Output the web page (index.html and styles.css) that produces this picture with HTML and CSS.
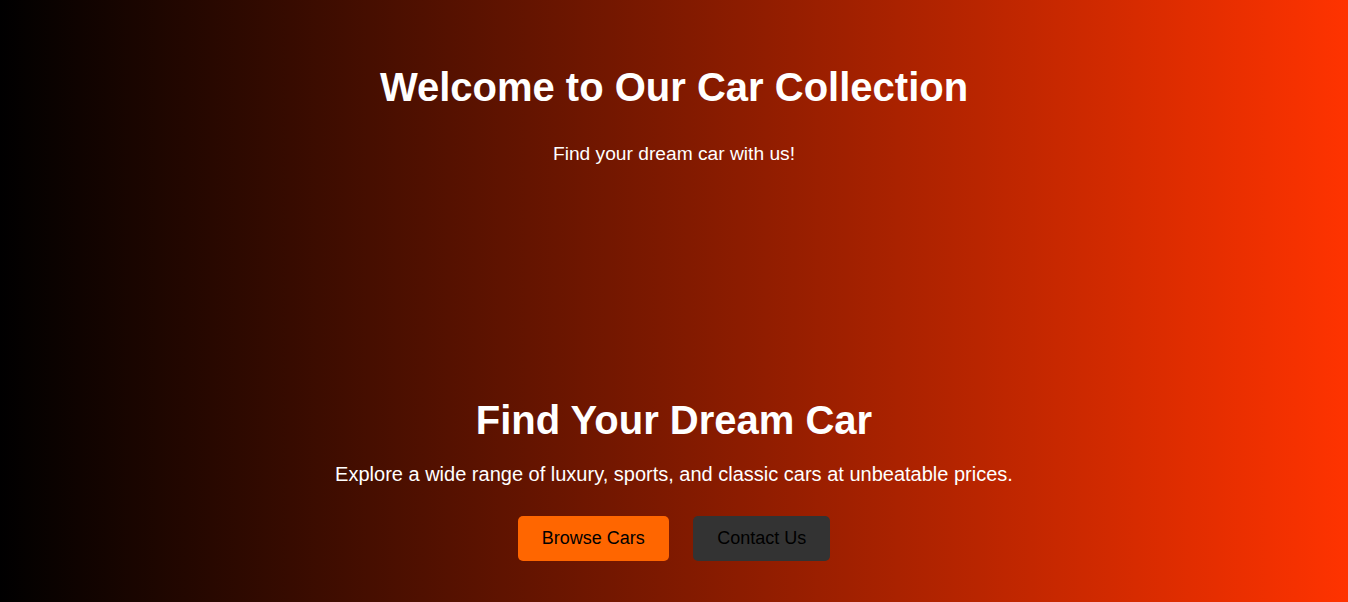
FILE: index.html
```html
<!DOCTYPE html>
<html>
<head>
    <meta charset="UTF-8">
    <title>Car Collection</title>
    <link rel="stylesheet" href="styles.css">
</head>
<body>
    <header class="header">
        <h1>Welcome to Our Car Collection</h1>
        <p>Find your dream car with us!</p>
    </header>

    <section class="hero">
        <h2>Find Your Dream Car</h2>
        <p>Explore a wide range of luxury, sports, and classic cars at unbeatable prices.</p>
        <div class="actions">
            <button class="btn btn-primary">Browse Cars</button>
            <button class="btn btn-dark">Contact Us</button>
        </div>
    </section>
</body>
</html>
```

FILE: styles.css
```css
html, body {
    margin: 0;
    min-height: 100vh;
}

body {
    font-family: 'Liberation Sans', Arial, Helvetica, sans-serif;
    background: linear-gradient(to right, #000000, #ff3300);
    color: #ffffff;
}

.header {
    text-align: center;
    padding-top: 65px;
}

.header h1 {
    margin: 0;
    font-size: 40px;
}

.header p {
    margin: 33px 0 0;
    font-size: 19.2px;
}

.hero {
    text-align: center;
    margin-top: 233px;
}

.hero h2 {
    margin: 0;
    font-size: 40px;
}

.hero p {
    margin: 20px 0 0;
    font-size: 20px;
}

.actions {
    margin-top: 30px;
}

.btn {
    font-family: inherit;
    font-size: 18px;
    padding: 12px 24px;
    margin: 0 10px;
    border: none;
    border-radius: 5px;
    color: #000000;
    cursor: pointer;
}

.btn-primary {
    background: #ff6600;
}

.btn-dark {
    background: #333333;
}
```
